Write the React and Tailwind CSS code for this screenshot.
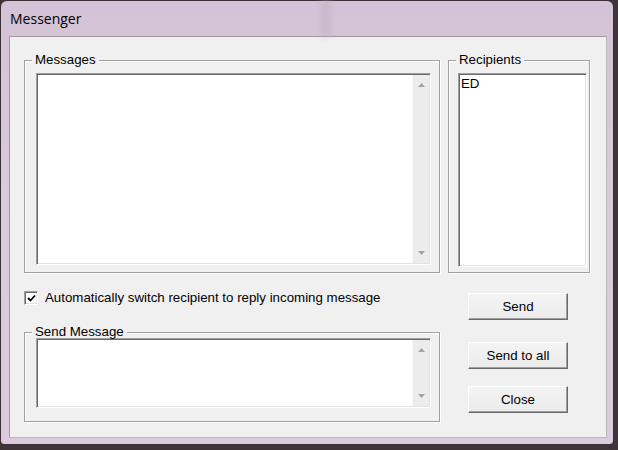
import React from 'react';

const FONT = { fontFamily: '"Liberation Sans", Arial, sans-serif' };

function ScrollArrow({ up }) {
  return (
    <svg width="7" height="4" viewBox="0 0 7 4">
      <path d={up ? 'M3.5 0 L7 4 L0 4 Z' : 'M0 0 L7 0 L3.5 4 Z'} fill="#a3a3a3" />
    </svg>
  );
}

function ListBox({ className, scroll, children }) {
  return (
    <div
      className={`flex bg-white border border-t-[#a0a0a0] border-l-[#a0a0a0] border-b-white border-r-white p-[1px] shadow-[inset_1px_1px_0_#696969,inset_-1px_-1px_0_#e3e3e3] ${className}`}
    >
      <div className="flex-1 px-[1px] text-[13.3px] leading-[16px] text-black">{children}</div>
      {scroll && (
        <div className="w-[17px] flex flex-col justify-between items-center bg-[#ececec] border-l border-[#f7f7f7] py-[8px]">
          <ScrollArrow up />
          <ScrollArrow />
        </div>
      )}
    </div>
  );
}

function GroupBox({ label, className, children }) {
  return (
    <div
      className={`relative border border-[#a0a0a0] shadow-[1px_1px_0_#fff,inset_1px_1px_0_#fff] ${className}`}
    >
      {children}
      <span className="absolute -top-[8px] left-[7px] px-[3px] bg-[#f0f0f0] text-[13.3px] leading-[13px] text-black">
        {label}
      </span>
    </div>
  );
}

function Button({ children, className }) {
  return (
    <button
      className={`w-[100px] h-[27px] bg-gradient-to-b from-[#f4f4f4] to-[#ebebeb] border border-t-white border-l-white border-b-[#696969] border-r-[#696969] shadow-[inset_-1px_-1px_0_#a0a0a0] text-[13.3px] text-black ${className}`}
    >
      {children}
    </button>
  );
}

export default function App() {
  return (
    <div className="relative w-[618px] h-[450px] bg-[#3e3539] overflow-hidden" style={FONT}>
      <div className="w-[614px] h-[445px] flex flex-col rounded-t-[7px] rounded-b-[4px] border border-[#3a3036] bg-gradient-to-b from-[#d4c3d6] via-[#dacbdc] to-[#dccbde]">
        {/* title bar */}
        <div className="h-[35px] flex items-start pl-[9px] pt-[9px] relative">
          <span className="text-[14px] leading-[18px] text-black" style={{ fontFamily: '"Open Sans", "Noto Sans", sans-serif' }}>
            Messenger
          </span>
          <div className="absolute left-[320px] top-0 w-[10px] h-[35px] bg-[#c0b0c4] blur-[3px] opacity-60" />
        </div>

        {/* client area */}
        <div className="ml-[8px] mr-[6px] mb-[6px] flex-1 bg-[#f0f0f0] border border-t-[#9a9a9a] border-l-[#9a9a9a] border-b-[#b8b8b8] border-r-[#b8b8b8] pl-[14px] pt-[23px] flex flex-col">
          <div className="flex gap-[8px]">
            <GroupBox label="Messages" className="w-[416px] h-[213px] pl-[11px] pt-[12px]">
              <ListBox scroll className="w-[395px] h-[192px]" />
            </GroupBox>
            <GroupBox label="Recipients" className="w-[142px] h-[213px] pl-[9px] pt-[12px]">
              <ListBox className="w-[129px] h-[194px]">
                <div className="pt-[1px]">ED</div>
              </ListBox>
            </GroupBox>
          </div>

          <div className="flex mt-[18px]">
            <div className="flex flex-col">
              <label className="flex items-center h-[14px] gap-[7px] text-[13.3px] text-black">
                <span className="w-[14px] h-[14px] flex items-center justify-center bg-white border border-t-[#a0a0a0] border-l-[#a0a0a0] border-b-white border-r-white shadow-[inset_1px_1px_0_#696969,inset_-1px_-1px_0_#e3e3e3]">
                  <svg width="9" height="9" viewBox="0 0 9 9">
                    <path d="M1 4 L3.5 6.5 L8 1.5" stroke="#000" strokeWidth="1.8" fill="none" />
                  </svg>
                </span>
                Automatically switch recipient to reply incoming message
              </label>
              <GroupBox label="Send Message" className="mt-[27px] w-[416px] h-[90px] pl-[11px] pt-[5px]">
                <ListBox scroll className="w-[395px] h-[70px]" />
              </GroupBox>
            </div>
            <div className="flex flex-col ml-[28px] pt-[2px]">
              <Button>Send</Button>
              <Button className="mt-[22px]">Send to all</Button>
              <Button className="mt-[17px]">Close</Button>
            </div>
          </div>
        </div>
      </div>
    </div>
  );
}
